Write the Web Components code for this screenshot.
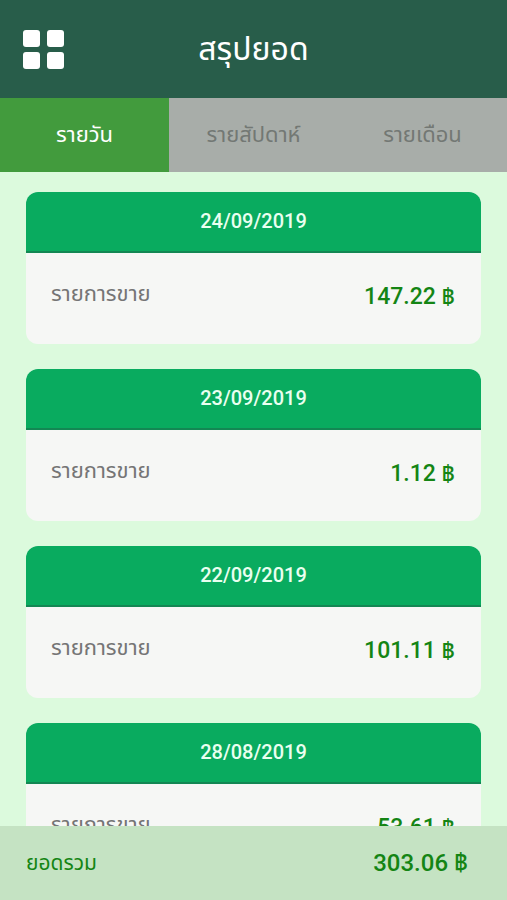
<!DOCTYPE html>
<html lang="th">
<head>
<meta charset="utf-8">
<meta name="viewport" content="width=device-width, initial-scale=1">
<title>สรุปยอด</title>
<style>
  body {
    margin: 0;
    font-family: Roboto, "Noto Sans Thai", "Noto Sans", sans-serif;
    background-color: #dcfadd;
  }
</style>
</head>
<body>
<summary-app></summary-app>

<script>
class appBar extends HTMLElement {
  constructor() {
    super();
    this.shadowDOM = this.attachShadow({mode: 'open'});
    this.shadowDOM.innerHTML = `
      <style>
        :host {
          display: grid;
          grid-template-columns: 64px 1fr 64px;
          align-items: center;
          height: 98px;
          background-color: #285d4a;
          color: #fff;
        }
        button {
          display: flex;
          justify-content: flex-end;
          padding: 0;
          border: 0;
          background: none;
          color: inherit;
          cursor: pointer;
        }
        h1 {
          margin: 0;
          font-size: 32px;
          font-weight: 400;
          line-height: 48px;
          text-align: center;
        }
      </style>
      <button type="button" aria-label="เมนู">
        <svg width="41" height="39" viewBox="0 0 41 39" fill="currentColor" aria-hidden="true">
          <rect width="17" height="17" rx="3"/>
          <rect x="24" width="17" height="17" rx="3"/>
          <rect y="22" width="17" height="17" rx="3"/>
          <rect x="24" y="22" width="17" height="17" rx="3"/>
        </svg>
      </button>
      <h1><slot></slot></h1>`;
  }
}
customElements.define('app-bar', appBar);

class periodTabs extends HTMLElement {
  set data(data) {
    this._data = data;
    this.render();
  }
  constructor() {
    super();
    this.shadowDOM = this.attachShadow({mode: 'open'});
  }
  render() {
    this.shadowDOM.innerHTML = `
      <style>
        :host {
          display: grid;
          grid-template-columns: repeat(3, 1fr);
          height: 74px;
          background-color: #a8ada9;
        }
        button {
          padding: 0;
          border: 0;
          background: none;
          color: #737874;
          font: inherit;
          font-size: 22px;
          line-height: 32px;
          cursor: pointer;
        }
        button[aria-pressed="true"] {
          background-color: #429b3d;
          color: #fff;
        }
      </style>`;
    this._data.forEach((label, i) => {
      const tab = document.createElement('button');
      tab.type = 'button';
      tab.textContent = label;
      tab.setAttribute('aria-pressed', i === 0);
      tab.addEventListener('click', () => {
        this.shadowDOM.querySelectorAll('button').forEach(other => {
          other.setAttribute('aria-pressed', other === tab);
        });
      });
      this.shadowDOM.appendChild(tab);
    });
  }
}
customElements.define('period-tabs', periodTabs);

class dayCard extends HTMLElement {
  set data(data) {
    this._data = data;
    this.render();
  }
  constructor() {
    super();
    this.shadowDOM = this.attachShadow({mode: 'open'});
  }
  render() {
    this.shadowDOM.innerHTML = `
      <style>
        :host {
          display: block;
          flex: none;
          border-radius: 12px;
          overflow: hidden;
          background-color: #f6f7f5;
        }
        h2 {
          margin: 0;
          padding: 15px 0 16px;
          border-bottom: 2px solid #138753;
          background-color: #09ab5f;
          color: #e9fff0;
          font-size: 20px;
          font-weight: 500;
          line-height: 28px;
          text-align: center;
        }
        .row {
          display: flex;
          justify-content: space-between;
          align-items: flex-start;
          padding: 28px 26px 31px 25px;
        }
        .label {
          color: #757575;
          font-size: 22px;
          line-height: 26px;
        }
        .amount {
          color: #148514;
          font-size: 23px;
          font-weight: 500;
          line-height: 32px;
        }
      </style>
      <h2>${this._data.date}</h2>
      <div class="row">
        <span class="label">รายการขาย</span>
        <span class="amount">${this._data.amount} ฿</span>
      </div>`;
  }
}
customElements.define('day-card', dayCard);

class totalBar extends HTMLElement {
  constructor() {
    super();
    this.shadowDOM = this.attachShadow({mode: 'open'});
    this.shadowDOM.innerHTML = `
      <style>
        :host {
          display: flex;
          justify-content: space-between;
          align-items: center;
          height: 74px;
          padding: 0 39px 0 26px;
          background-color: #c5e3c3;
          color: #148514;
          font-size: 21px;
          line-height: 32px;
        }
        .amount {
          font-size: 24px;
          font-weight: 500;
        }
      </style>
      <span>ยอดรวม</span>
      <span class="amount"><slot></slot></span>`;
  }
}
customElements.define('total-bar', totalBar);

class summaryApp extends HTMLElement {
  constructor() {
    super();
    this.shadowDOM = this.attachShadow({mode: 'open'});
  }
  connectedCallback() {
    this.shadowDOM.innerHTML = `
      <style>
        :host {
          display: flex;
          flex-direction: column;
          height: 100vh;
        }
        app-bar, period-tabs, total-bar {
          flex: none;
        }
        main {
          flex: 1;
          min-height: 0;
          display: flex;
          flex-direction: column;
          gap: 25px;
          padding: 20px 26px;
          overflow-y: auto;
          scrollbar-width: none;
        }
      </style>
      <app-bar>สรุปยอด</app-bar>
      <period-tabs></period-tabs>
      <main></main>
      <total-bar>303.06 ฿</total-bar>`;

    this.shadowDOM.querySelector('period-tabs').data = ['รายวัน', 'รายสัปดาห์', 'รายเดือน'];

    const days = [
      {date: '24/09/2019', amount: '147.22'},
      {date: '23/09/2019', amount: '1.12'},
      {date: '22/09/2019', amount: '101.11'},
      {date: '28/08/2019', amount: '53.61'}
    ];
    const list = this.shadowDOM.querySelector('main');
    days.forEach(day => {
      const card = document.createElement('day-card');
      card.data = day;
      list.appendChild(card);
    });
  }
}
customElements.define('summary-app', summaryApp);
</script>
</body>
</html>
